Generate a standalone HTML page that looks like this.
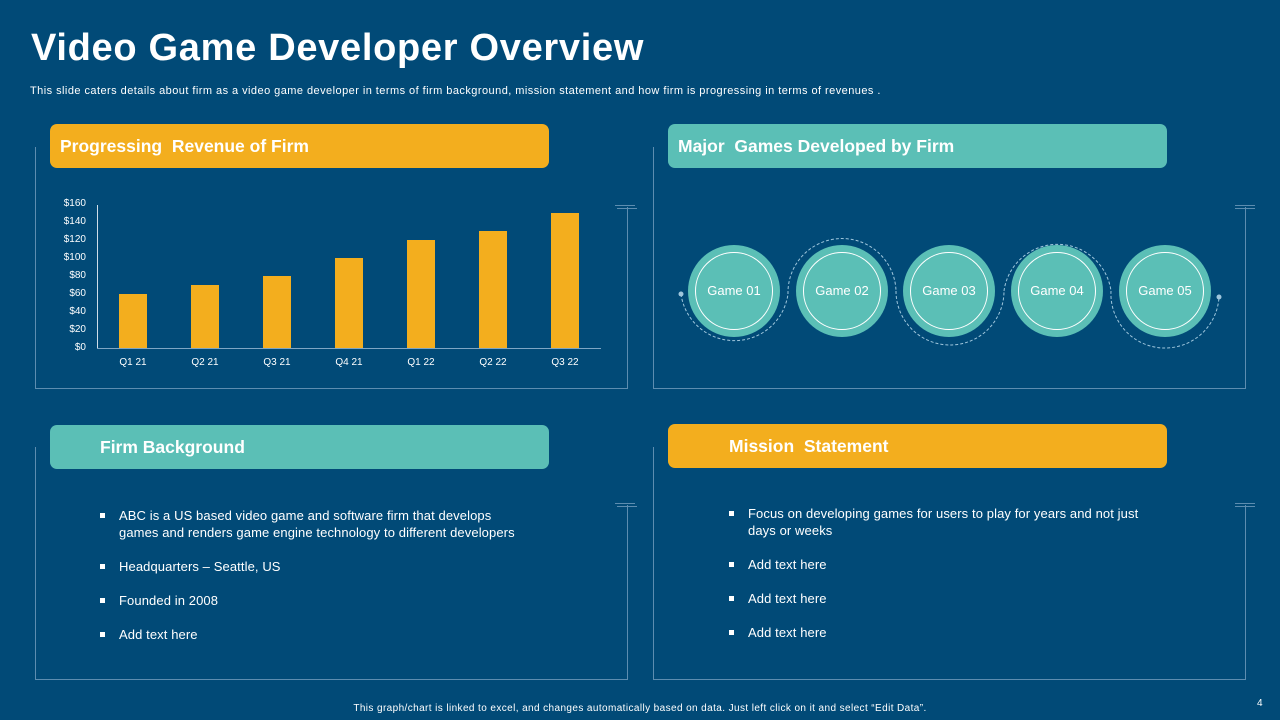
<!DOCTYPE html>
<html><head><meta charset="utf-8"><style>
*{margin:0;padding:0;box-sizing:border-box}
body{width:1280px;height:720px;background:#014a77;position:relative;overflow:hidden;font-family:"Liberation Sans",sans-serif;color:#fff}
.a{position:absolute}
.hdr{position:absolute;height:44px;border-radius:7px;font-weight:bold;font-size:17.5px;line-height:44px}
.o{background:#f3ae1e}.t{background:#5bbfb6}
.fr{position:absolute;border-left:1px solid #5d8db0;border-bottom:1px solid #5d8db0}
.rl{position:absolute;width:1px;background:#5d8db0}
.tk{position:absolute;height:1px;background:#5d8db0}
.bar{position:absolute;width:28px;background:#f3ae1e;bottom:372px}
.yl{position:absolute;font-size:10px;right:1194px;text-align:right}
.xl{position:absolute;font-size:10px;top:357px;width:60px;text-align:center}
ul{list-style:none;position:absolute;font-size:13px;line-height:17px;letter-spacing:0.1px}
li{position:relative;padding-left:19px;margin-bottom:17px}
li:before{content:"";position:absolute;left:0;top:6px;width:5px;height:5px;background:#fff}
.c{position:absolute;width:92px;height:92px;border-radius:50%;background:#5bbfb6}
.c div{position:absolute;left:7px;top:7px;width:78px;height:78px;border-radius:50%;border:1.5px solid #fff;font-size:13px;line-height:75px;text-align:center}
</style></head><body>
<div class="a" style="left:31px;top:27px;font-size:38px;font-weight:bold;letter-spacing:0.7px">Video Game Developer Overview</div>
<div class="a" style="left:30px;top:85px;font-size:11px;letter-spacing:0.45px">This slide caters details about firm as a video game developer in terms of firm background, mission statement and how firm is progressing in terms of revenues .</div>

<div class="fr" style="left:35px;top:147px;width:593px;height:242px"></div>
<div class="rl" style="left:627px;top:207px;height:182px"></div><div class="tk" style="left:615px;top:205px;width:20px"></div><div class="tk" style="left:617px;top:208px;width:20px"></div>
<div class="fr" style="left:653px;top:147px;width:593px;height:242px"></div>
<div class="rl" style="left:1245px;top:207px;height:182px"></div><div class="tk" style="left:1235px;top:205px;width:20px"></div><div class="tk" style="left:1235px;top:208px;width:20px"></div>
<div class="fr" style="left:35px;top:447px;width:593px;height:233px"></div>
<div class="rl" style="left:627px;top:505px;height:175px"></div><div class="tk" style="left:615px;top:503px;width:20px"></div><div class="tk" style="left:617px;top:506px;width:20px"></div>
<div class="fr" style="left:653px;top:447px;width:593px;height:233px"></div>
<div class="rl" style="left:1245px;top:505px;height:175px"></div><div class="tk" style="left:1235px;top:503px;width:20px"></div><div class="tk" style="left:1235px;top:506px;width:20px"></div>

<div class="hdr o" style="left:50px;top:124px;width:499px;padding-left:10px">Progressing&nbsp; Revenue of Firm</div>
<div class="hdr t" style="left:668px;top:124px;width:499px;padding-left:10px">Major&nbsp; Games Developed by Firm</div>
<div class="hdr t" style="left:50px;top:425px;width:499px;padding-left:50px">Firm Background</div>
<div class="hdr o" style="left:668px;top:424px;width:499px;padding-left:61px">Mission&nbsp; Statement</div>

<div class="a" style="left:97px;top:205px;width:1px;height:144px;background:#cfdde8"></div>
<div class="a" style="left:97px;top:348px;width:504px;height:1px;background:#7fa6c4"></div>
<div class="yl" style="top:198px">$160</div><div class="yl" style="top:216px">$140</div><div class="yl" style="top:234px">$120</div><div class="yl" style="top:252px">$100</div><div class="yl" style="top:270px">$80</div><div class="yl" style="top:288px">$60</div><div class="yl" style="top:306px">$40</div><div class="yl" style="top:324px">$20</div><div class="yl" style="top:342px">$0</div>
<div class="bar" style="left:119px;height:54px"></div>
<div class="bar" style="left:191px;height:63px"></div>
<div class="bar" style="left:263px;height:72px"></div>
<div class="bar" style="left:335px;height:90px"></div>
<div class="bar" style="left:407px;height:108px"></div>
<div class="bar" style="left:479px;height:117px"></div>
<div class="bar" style="left:551px;height:135px"></div>
<div class="xl" style="left:103px">Q1 21</div><div class="xl" style="left:175px">Q2 21</div><div class="xl" style="left:247px">Q3 21</div><div class="xl" style="left:319px">Q4 21</div><div class="xl" style="left:391px">Q1 22</div><div class="xl" style="left:463px">Q2 22</div><div class="xl" style="left:535px">Q3 22</div>

<svg class="a" style="left:0;top:0" width="1280" height="720" fill="none" stroke="#9fc6dc" stroke-width="1" stroke-dasharray="3 2">
<path d="M681 294 A54 54 0 0 0 788 294"/>
<path d="M788 294 A54 54 0 0 1 896 291"/>
<path d="M896 291 A54 54 0 0 0 1004 291"/>
<path d="M1004 291 A54 54 0 0 1 1111 291"/>
<path d="M1111 291 A54 54 0 0 0 1219 297"/>
<circle cx="681" cy="294" r="2.5" fill="#9fc6dc" stroke="none"/>
<circle cx="1219" cy="297" r="2.5" fill="#9fc6dc" stroke="none"/>
</svg>
<div class="c" style="left:688px;top:245px"><div>Game 01</div></div>
<div class="c" style="left:796px;top:245px"><div>Game 02</div></div>
<div class="c" style="left:903px;top:245px"><div>Game 03</div></div>
<div class="c" style="left:1011px;top:245px"><div>Game 04</div></div>
<div class="c" style="left:1119px;top:245px"><div>Game 05</div></div>

<ul style="left:100px;top:507px;width:480px">
<li>ABC is a US based video game and software firm that develops<br>games and renders game engine technology to different developers</li>
<li>Headquarters – Seattle, US</li>
<li>Founded in 2008</li>
<li>Add text here</li>
</ul>
<ul style="left:729px;top:505px;width:460px">
<li>Focus on developing games for users to play for years and not just<br>days or weeks</li>
<li>Add text here</li>
<li>Add text here</li>
<li>Add text here</li>
</ul>

<div class="a" style="left:0;width:1280px;top:703px;font-size:10px;text-align:center;letter-spacing:0.4px">This graph/chart is linked to excel, and changes automatically based on data. Just left click on it and select “Edit Data”.</div>
<div class="a" style="left:1257px;top:698px;font-size:10px">4</div>
</body></html>
